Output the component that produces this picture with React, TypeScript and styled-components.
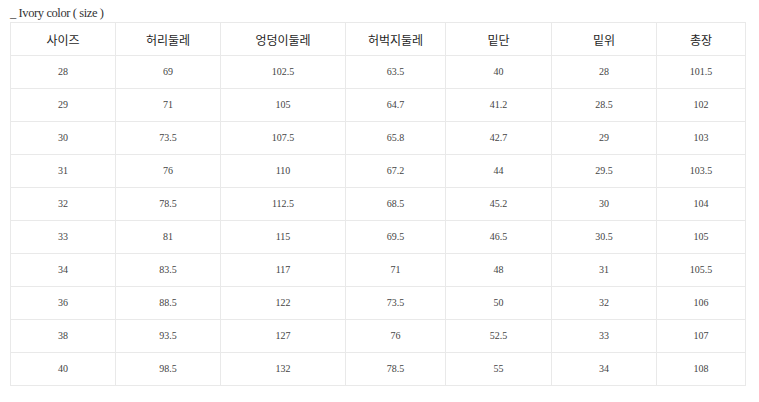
import React from "react";
import styled, { createGlobalStyle } from "styled-components";

const GlobalStyle = createGlobalStyle`
    body {
        margin: 0;
        background: #ffffff;
    }
`

const Wrapper = styled.div`
    padding: 4px 14px 0 10px;
    width: 735px;
`

const Title = styled.div`
    font-family: "Liberation Serif", "DejaVu Serif", serif;
    font-size: 12.5px;
    color: #333333;
    height: 18px;
    line-height: 18px;
    letter-spacing: -0.4px;
`

const SizeTable = styled.table`
    border-collapse: collapse;
    table-layout: fixed;
    width: 735px;
`

const HeadCell = styled.th`
    border: 1px solid #e9e9e9;
    height: 32px;
    padding: 0;
    font-family: "Noto Sans CJK KR", "Noto Sans", sans-serif;
    font-weight: 400;
    font-size: 12px;
    color: #1e1e1e;
    text-align: center;
`

const Cell = styled.td`
    border: 1px solid #e9e9e9;
    height: 32px;
    padding: 0;
    font-family: "Liberation Serif", "DejaVu Serif", serif;
    font-size: 10px;
    line-height: 14px;
    color: #444444;
    text-align: center;
`

const columns = [
    { label: "사이즈", width: 105 },
    { label: "허리둘레", width: 105 },
    { label: "엉덩이둘레", width: 125 },
    { label: "허벅지둘레", width: 100 },
    { label: "밑단", width: 106 },
    { label: "밑위", width: 105 },
    { label: "총장", width: 89 },
]

const rows = [
    ["28", "69", "102.5", "63.5", "40", "28", "101.5"],
    ["29", "71", "105", "64.7", "41.2", "28.5", "102"],
    ["30", "73.5", "107.5", "65.8", "42.7", "29", "103"],
    ["31", "76", "110", "67.2", "44", "29.5", "103.5"],
    ["32", "78.5", "112.5", "68.5", "45.2", "30", "104"],
    ["33", "81", "115", "69.5", "46.5", "30.5", "105"],
    ["34", "83.5", "117", "71", "48", "31", "105.5"],
    ["36", "88.5", "122", "73.5", "50", "32", "106"],
    ["38", "93.5", "127", "76", "52.5", "33", "107"],
    ["40", "98.5", "132", "78.5", "55", "34", "108"],
]

export default function App() {
    return (
        <>
            <GlobalStyle />
            <Wrapper>
                <Title>_ Ivory color ( size )</Title>
                <SizeTable>
                    <colgroup>
                        {columns.map((c) => (
                            <col key={c.label} style={{ width: c.width }} />
                        ))}
                    </colgroup>
                    <thead>
                        <tr>
                            {columns.map((c) => (
                                <HeadCell key={c.label}>{c.label}</HeadCell>
                            ))}
                        </tr>
                    </thead>
                    <tbody>
                        {rows.map((r, i) => (
                            <tr key={i}>
                                {r.map((v, j) => (
                                    <Cell key={j}>{v}</Cell>
                                ))}
                            </tr>
                        ))}
                    </tbody>
                </SizeTable>
            </Wrapper>
        </>
    );
}
